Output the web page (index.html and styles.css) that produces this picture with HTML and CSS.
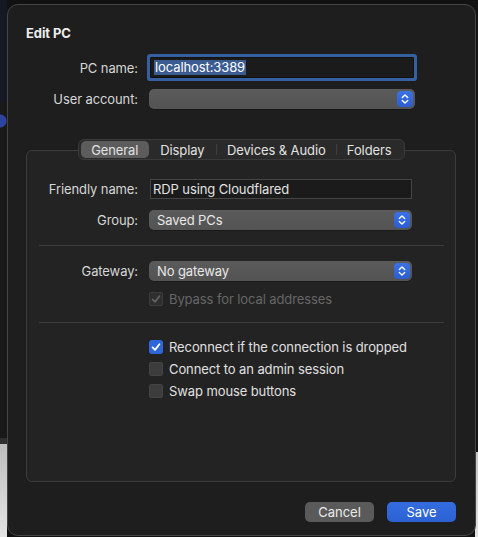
FILE: index.html
```html
<!DOCTYPE html>
<html lang="en">
<head>
<meta charset="utf-8">
<title>Edit PC</title>
<link rel="stylesheet" href="styles.css">
</head>
<body>
<div class="window">
  <h1 class="title">Edit PC</h1>

  <div class="form top-form">
    <label class="lbl">PC name:</label>
    <div class="field focused"><span class="sel">localhost:3389</span></div>

    <label class="lbl">User account:</label>
    <div class="popup">
      <span class="popup-text"></span>
      <span class="stepper"><svg viewBox="0 0 16 16" width="16" height="16"><path d="M5.3 6.6 L8 4 L10.7 6.6 M5.3 9.4 L8 12 L10.7 9.4" fill="none" stroke="#fff" stroke-width="1.4" stroke-linecap="round" stroke-linejoin="round"/></svg></span>
    </div>
  </div>

  <div class="tabbox">
    <div class="segments">
      <span class="seg seg-general active">General</span>
      <span class="seg seg-display">Display</span>
      <span class="seg seg-devices">Devices &amp; Audio</span>
      <span class="seg seg-folders">Folders</span>
    </div>

    <div class="form box-form">
      <label class="lbl">Friendly name:</label>
      <div class="field plain">RDP using Cloudflared</div>

      <label class="lbl">Group:</label>
      <div class="popup">
        <span class="popup-text">Saved PCs</span>
        <span class="stepper"><svg viewBox="0 0 16 16" width="16" height="16"><path d="M5.3 6.6 L8 4 L10.7 6.6 M5.3 9.4 L8 12 L10.7 9.4" fill="none" stroke="#fff" stroke-width="1.4" stroke-linecap="round" stroke-linejoin="round"/></svg></span>
      </div>
    </div>

    <div class="sep sep-1"></div>

    <div class="form box-form gateway-form">
      <label class="lbl">Gateway:</label>
      <div class="popup">
        <span class="popup-text">No gateway</span>
        <span class="stepper"><svg viewBox="0 0 16 16" width="16" height="16"><path d="M5.3 6.6 L8 4 L10.7 6.6 M5.3 9.4 L8 12 L10.7 9.4" fill="none" stroke="#fff" stroke-width="1.4" stroke-linecap="round" stroke-linejoin="round"/></svg></span>
      </div>
    </div>

    <div class="check disabled bypass">
      <span class="box checked"><svg viewBox="0 0 14 14" width="14" height="14"><path d="M3.6 7.4 L6 9.9 L10.4 4.2" fill="none" stroke="currentColor" stroke-width="1.8" stroke-linecap="round" stroke-linejoin="round"/></svg></span>
      <span class="check-label">Bypass for local addresses</span>
    </div>

    <div class="sep sep-2"></div>

    <div class="checks">
      <div class="check">
        <span class="box checked on"><svg viewBox="0 0 14 14" width="14" height="14"><path d="M3.6 7.4 L6 9.9 L10.4 4.2" fill="none" stroke="currentColor" stroke-width="1.8" stroke-linecap="round" stroke-linejoin="round"/></svg></span>
        <span class="check-label">Reconnect if the connection is dropped</span>
      </div>
      <div class="check">
        <span class="box"></span>
        <span class="check-label">Connect to an admin session</span>
      </div>
      <div class="check">
        <span class="box"></span>
        <span class="check-label">Swap mouse buttons</span>
      </div>
    </div>
  </div>

  <div class="buttons">
    <button class="btn cancel">Cancel</button>
    <button class="btn save">Save</button>
  </div>
</div>
</body>
</html>
```

FILE: styles.css
```css
* { box-sizing: border-box; }

html, body { height: 100%; }

body {
  margin: 0;
  overflow: hidden;
  font-family: Inter, "Noto Sans", "Liberation Sans", sans-serif;
  font-size: 13px;
  letter-spacing: -0.1px;
  color: #dcdcdc;
  background:
    linear-gradient(#bdbdbd, #e4e4e4) left 0 top 444px / 7px 93px no-repeat,
    linear-gradient(#2e2e2e, #2e2e2e) left 0 top 438px / 7px 6px no-repeat,
    radial-gradient(circle at 0 50%, #2c43a0 0 6px, transparent 7px) left 0 top 112px / 8px 18px no-repeat,
    linear-gradient(#151925, #151925) left 0 top 0 / 7px 102px no-repeat,
    linear-gradient(#191919, #191919) left 0 top 102px / 7px 336px no-repeat,
    linear-gradient(#c4c4c4, #e0e0e0) right 0 top 452px / 3px 85px no-repeat,
    #121212;
}

.window {
  margin: 4px 0 0 7px;
  width: 469px;
  height: 532px;
  background: #1e1e1e;
  border: 1px solid #444;
  border-radius: 11px;
  padding: 20px 19px 0 0;
  display: flex;
  flex-direction: column;
}

.title {
  margin: 0 0 0 18px;
  font-size: 13px;
  line-height: 16px;
  font-weight: 700;
  color: #ececec;
}

.form {
  display: grid;
  align-items: center;
}

.top-form {
  grid-template-columns: 130px 268px;
  column-gap: 10px;
  row-gap: 11px;
  margin-top: 16px;
}

.lbl {
  text-align: right;
  color: #d6d6d6;
  line-height: 16px;
  white-space: nowrap;
}

.field {
  height: 21px;
  background: #1b1b1b;
  border: 1px solid #454545;
  padding: 0 3px;
  display: flex;
  align-items: center;
  color: #e2e2e2;
  white-space: nowrap;
}

.field.focused {
  margin-left: 2px;
  width: 264px;
  border-color: #111;
  box-shadow: 0 0 0 3px #35609f;
  border-radius: 1px;
}

.sel {
  background: #3b5c91;
  color: #fff;
  line-height: 15px;
  padding: 0 1px;
}

.popup {
  height: 20px;
  border-radius: 5px;
  background: linear-gradient(#5b5b5b, #535353);
  box-shadow: 0 0.5px 0 rgba(0,0,0,0.5);
  display: flex;
  align-items: center;
  justify-content: space-between;
  padding: 0 2px 0 8px;
  color: #e8e8e8;
}

.top-form .popup { width: 266px; margin-left: 1px; }

.stepper {
  width: 16px;
  height: 16px;
  border-radius: 4px;
  background: linear-gradient(#3a72e6, #2b5ecf);
  display: flex;
}

.tabbox {
  margin: 41px 0 0 18px;
  width: 430px;
  height: 332px;
  border: 1px solid #3c3c3c;
  border-radius: 6px;
  background: #232323;
  display: flex;
  flex-direction: column;
}

.segments {
  align-self: center;
  margin-top: -12px;
  height: 21px;
  width: 327px;
  display: flex;
  align-items: center;
  padding: 2px;
  border-radius: 6px;
  background: #2a2a2a;
  border: 1px solid #3a3a3a;
  margin-left: 1px;
}

.seg {
  height: 17px;
  display: flex;
  align-items: center;
  justify-content: center;
  color: #e2e2e2;
  line-height: 16px;
  position: relative;
}

.seg-general { width: 68px; }
.seg-display { width: 68px; }
.seg-devices { width: 121px; }
.seg-folders { width: 66px; }

.seg-devices::before,
.seg-folders::before {
  content: "";
  position: absolute;
  left: 0;
  top: 3px;
  bottom: 3px;
  width: 1px;
  background: #3f3f3f;
}

.seg.active {
  background: #5c5c5c;
  border-radius: 5px;
}

.box-form {
  grid-template-columns: 111px 263px;
  column-gap: 11px;
  row-gap: 11px;
  margin-top: 19px;
}

.box-form .field.plain {
  height: 20px;
  margin-left: 1px;
  width: 262px;
  padding-left: 2px;
}

.sep {
  height: 1px;
  background: #3a3a3a;
  margin: 15px 11px 0 12px;
}

.gateway-form { margin-top: 15px; }

.check {
  display: flex;
  align-items: center;
  gap: 6px;
  height: 16px;
  line-height: 16px;
  margin-left: 122px;
  white-space: nowrap;
}

.bypass { margin-top: 10px; }

.box {
  width: 14px;
  height: 14px;
  border-radius: 3px;
  background: #3c3c3c;
  box-shadow: inset 0 0 0 0.5px #4a4a4a;
  display: flex;
  color: #fff;
}

.box.on {
  background: #2f66d9;
  box-shadow: none;
}

.disabled .box {
  background: #2e2e2e;
  color: #626262;
}

.disabled .check-label { color: #666; }

.check-label { color: #e0e0e0; }

.checks {
  margin-top: 16px;
  display: flex;
  flex-direction: column;
  gap: 6px;
}

.buttons {
  margin-top: 20px;
  display: flex;
  justify-content: flex-end;
  gap: 13px;
}

.btn {
  width: 69px;
  height: 20px;
  border: none;
  border-radius: 5px;
  font: inherit;
  font-size: 13px;
  color: #ececec;
  padding: 0;
  line-height: 20px;
}

.cancel { background: #5a5a5a; }
.save { background: linear-gradient(#346de0, #2c61d3); color: #fff; }
```
